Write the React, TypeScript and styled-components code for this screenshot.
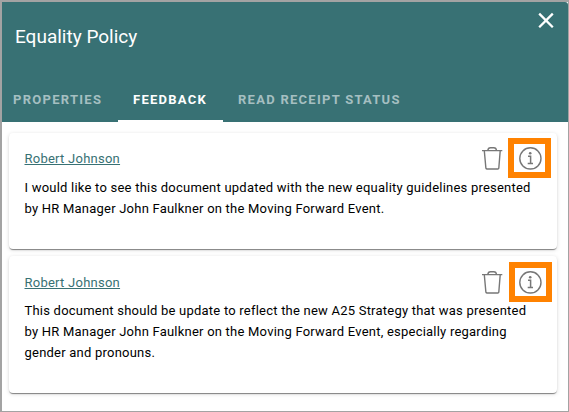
import React from "react";
import styled, { createGlobalStyle } from "styled-components";

const GlobalStyle = createGlobalStyle`
  * { box-sizing: border-box; }
  body { margin: 0; background: #fff; font-family: Roboto, sans-serif; overflow: hidden; }
`;

const Dialog = styled.main`
  width: 569px;
  height: 412px;
  border: solid #a3a3a3;
  border-width: 2px 1px 1px 2px;
  background: #fff;
`;

const Header = styled.header`
  height: 120px;
  display: flex;
  flex-direction: column;
  justify-content: space-between;
  background: #387174;
  border-top-right-radius: 3px;
  color: #fff;
`;

const TitleRow = styled.div`
  display: flex;
  justify-content: space-between;
  padding: 0 14px 0 13px;
`;

const Title = styled.h1`
  margin: 22px 0 0;
  font-size: 19px;
  line-height: 25px;
  font-weight: 400;
`;

const CloseButton = styled.button`
  width: 16px;
  height: 16px;
  margin-top: 10px;
  padding: 0;
  border: 0;
  background: none;
  color: inherit;
  svg { display: block; }
`;

const Tabs = styled.nav`
  display: flex;
  height: 44px;
`;

const Tab = styled.button<{ $active?: boolean; $width: number; $indent: number }>`
  width: ${(p) => p.$width}px;
  padding: 2px 0 0 ${(p) => p.$indent}px;
  border: 0;
  border-bottom: 2px solid ${(p) => (p.$active ? "#fff" : "transparent")};
  background: none;
  color: ${(p) => (p.$active ? "#fff" : "#a5bfc1")};
  font: 700 13px/40px Roboto, sans-serif;
  letter-spacing: 1.27px;
  white-space: nowrap;
  text-align: left;
`;

const List = styled.section`
  display: flex;
  flex-direction: column;
  gap: 7px;
  padding: 11px 11px 0 7px;
`;

const Card = styled.article<{ $height: number }>`
  height: ${(p) => p.$height}px;
  padding: 5px 6px 0 15.5px;
  border-radius: 4px;
  background: #fff;
  box-shadow: 0 2px 1px -1px rgba(0, 0, 0, 0.3), 0 1px 1px rgba(0, 0, 0, 0.2),
    0 1px 4px rgba(0, 0, 0, 0.14);
`;

const CardHead = styled.div<{ $offset: number }>`
  display: flex;
  justify-content: space-between;
  height: 39px;
  margin-top: ${(p) => p.$offset}px;
  margin-bottom: ${(p) => -p.$offset}px;
`;

const Author = styled.a`
  margin-top: 11px;
  color: #387174;
  font-size: 13px;
  line-height: 20px;
  letter-spacing: 0.25px;
  text-decoration: underline;
`;

const Actions = styled.div<{ $shift: number }>`
  display: flex;
  gap: ${(p) => 5 + p.$shift}px;
  margin-right: ${(p) => -p.$shift}px;
`;

const TrashButton = styled.button`
  width: 22px;
  height: 24px;
  margin-top: 8px;
  padding: 0;
  border: 0;
  background: none;
  color: #777;
  svg { display: block; }
`;

const InfoButton = styled.button<{ $shift: number }>`
  width: 43px;
  height: 40px;
  padding: 0 0 0 ${(p) => 4 - p.$shift}px;
  border: 6px solid #ff8200;
  background: none;
  color: #777;
  svg { display: block; }
`;

const Message = styled.p`
  margin: 0;
  color: #000;
  font-size: 13px;
  line-height: 21px;
  letter-spacing: 0.222px;
  white-space: pre;
`;

const CloseIcon = () => (
  <svg width="16" height="16" viewBox="0 0 16 16" fill="none" stroke="currentColor" strokeWidth="2.3">
    <path d="M1.2 1.6 14.8 15.2M14.8 1.6 1.2 15.2" />
  </svg>
);

const TrashIcon = () => (
  <svg width="22" height="24" viewBox="0 0 22 24" fill="none" stroke="currentColor" strokeWidth="1.4">
    <path d="M1 4.6H21.3M6.8 4.5C7 2.6 8 1.7 9.5 1.7H12.8C14.3 1.7 15.3 2.6 15.5 4.5M3.3 4.8 4.9 22.2Q5 23 5.8 23H16.9Q17.7 23 17.8 22.2L19.2 4.8" />
  </svg>
);

const InfoIcon = () => (
  <svg width="24" height="24" viewBox="0 0 24 24" fill="none" stroke="currentColor">
    <circle cx="12.4" cy="12.4" r="10.6" strokeWidth="1.4" />
    <path d="M10 10.3H12.6V17.2M9.7 17.5H15" strokeWidth="1.5" />
    <circle cx="12.2" cy="7.3" r="1.3" fill="currentColor" stroke="none" />
  </svg>
);

const feedback = [
  {
    height: 116,
    offset: 0,
    text: "I would like to see this document updated with the new equality guidelines presented\nby HR Manager John Faulkner on the Moving Forward Event.",
  },
  {
    height: 137,
    offset: 1,
    text: "This document should be update to reflect the new A25 Strategy that was presented\nby HR Manager John Faulkner on the Moving Forward Event, especially regarding\ngender and pronouns.",
  },
];

export default function App() {
  return (
    <>
      <GlobalStyle />
      <Dialog>
        <Header>
          <TitleRow>
            <Title>Equality Policy</Title>
            <CloseButton aria-label="Close"><CloseIcon /></CloseButton>
          </TitleRow>
          <Tabs>
            <Tab $width={116} $indent={11}>PROPERTIES</Tab>
            <Tab $width={105} $indent={15} $active>FEEDBACK</Tab>
            <Tab $width={192} $indent={15}>READ RECEIPT STATUS</Tab>
          </Tabs>
        </Header>
        <List>
          {feedback.map((item) => (
            <Card key={item.height} $height={item.height}>
              <CardHead $offset={item.offset}>
                <Author href="#">Robert Johnson</Author>
                <Actions $shift={item.offset}>
                  <TrashButton aria-label="Delete"><TrashIcon /></TrashButton>
                  <InfoButton aria-label="Details" $shift={item.offset}><InfoIcon /></InfoButton>
                </Actions>
              </CardHead>
              <Message>{item.text}</Message>
            </Card>
          ))}
        </List>
      </Dialog>
    </>
  );
}
